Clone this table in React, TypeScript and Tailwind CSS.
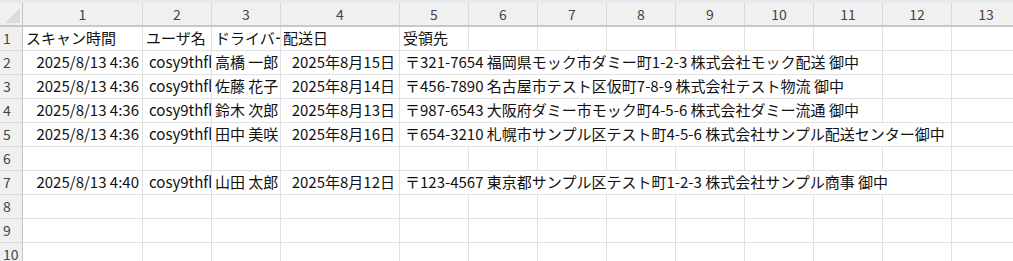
import React from "react";

const COLS =
  "grid grid-cols-[23px_120px_69px_69px_119px_69px_69px_69px_69px_69px_69px_69px_69px_69px]";

type Row = {
  n: number;
  a?: string;
  b?: string;
  c?: string;
  d?: string;
  e?: string;
  span?: number;
};

const rows: Row[] = [
  { n: 2, a: "2025/8/13 4:36", b: "cosy9thfl", c: "高橋 一郎", d: "2025年8月15日", e: "〒321-7654 福岡県モック市ダミー町1-2-3 株式会社モック配送 御中", span: 7 },
  { n: 3, a: "2025/8/13 4:36", b: "cosy9thfl", c: "佐藤 花子", d: "2025年8月14日", e: "〒456-7890 名古屋市テスト区仮町7-8-9 株式会社テスト物流 御中", span: 7 },
  { n: 4, a: "2025/8/13 4:36", b: "cosy9thfl", c: "鈴木 次郎", d: "2025年8月13日", e: "〒987-6543 大阪府ダミー市モック町4-5-6 株式会社ダミー流通 御中", span: 7 },
  { n: 5, a: "2025/8/13 4:36", b: "cosy9thfl", c: "田中 美咲", d: "2025年8月16日", e: "〒654-3210 札幌市サンプル区テスト町4-5-6 株式会社サンプル配送センター御中", span: 8 },
  { n: 6 },
  { n: 7, a: "2025/8/13 4:40", b: "cosy9thfl", c: "山田 太郎", d: "2025年8月12日", e: "〒123-4567 東京都サンプル区テスト町1-2-3 株式会社サンプル商事 御中", span: 8 },
  { n: 8 },
  { n: 9 },
  { n: 10 },
];

const cell = "h-[24px] border-r border-b border-[#e1e1e1] overflow-hidden whitespace-nowrap flex items-center";

const spanClass: Record<number, string> = {
  7: "col-span-7",
  8: "col-span-8",
};

function RowHead({ n }: { n: number }) {
  return (
    <div className="h-[24px] bg-[#f0f0f0] border-r border-r-[#c4c4c4] border-b border-b-[#dadada] flex items-center pl-[3px] text-[14px] text-[#444]">
      {n}
    </div>
  );
}

function DataRow({ r }: { r: Row }) {
  const empties = r.e ? 9 - (r.span ?? 1) : 9;
  return (
    <div className={COLS}>
      <RowHead n={r.n} />
      <div className={`${cell} justify-end pr-[3px]`}>{r.a}</div>
      <div className={`${cell} pl-[6px]`}>{r.b}</div>
      <div className={`${cell} pl-[3px]`}>{r.c}</div>
      <div className={`${cell} justify-end pr-[4px]`}>{r.d}</div>
      {r.e ? (
        <div className={`${cell} ${spanClass[r.span ?? 7]} pl-[5px]`}>{r.e}</div>
      ) : (
        <div className={cell} />
      )}
      {Array.from({ length: r.e ? empties : 8 }).map((_, i) => (
        <div key={i} className={cell} />
      ))}
    </div>
  );
}

export default function App() {
  const headers = Array.from({ length: 13 }, (_, i) => i + 1);
  return (
    <div
      className="w-[1013px] h-[261px] overflow-hidden bg-white text-[15px] text-[#111]"
      style={{ fontFamily: '"Noto Sans CJK JP", "Noto Sans", sans-serif' }}
    >
      <div className="h-[3px] bg-[#e6e8ec]" />
      {/* column header */}
      <div className={`${COLS} border-b-2 border-[#c8c8c8]`}>
        <div className="h-[22px] bg-[#f0f0f0] border-r border-r-[#c4c4c4] relative">
          <svg className="absolute left-[5px] top-[5px]" width="15" height="15" viewBox="0 0 15 15">
            <polygon points="15,0 15,15 0,15" fill="#dcdcdc" />
          </svg>
        </div>
        {headers.map((h) => (
          <div
            key={h}
            className="h-[22px] bg-[#f0f0f0] border-r border-[#dadada] flex items-center justify-center text-[14px] text-[#444]"
          >
            {h}
          </div>
        ))}
      </div>
      {/* row 1 */}
      <div className={COLS}>
        <RowHead n={1} />
        <div className={`${cell} pl-[3px]`}>スキャン時間</div>
        <div className={`${cell} pl-[3px]`}>ユーザ名</div>
        <div className={`${cell} pl-[3px]`}>ドライバー</div>
        <div className={`${cell} pl-[2px]`}>配送日</div>
        <div className={`${cell} pl-[3px]`}>受領先</div>
        {Array.from({ length: 8 }).map((_, i) => (
          <div key={i} className={cell} />
        ))}
      </div>
      {rows.map((r) => (
        <DataRow key={r.n} r={r} />
      ))}
    </div>
  );
}
